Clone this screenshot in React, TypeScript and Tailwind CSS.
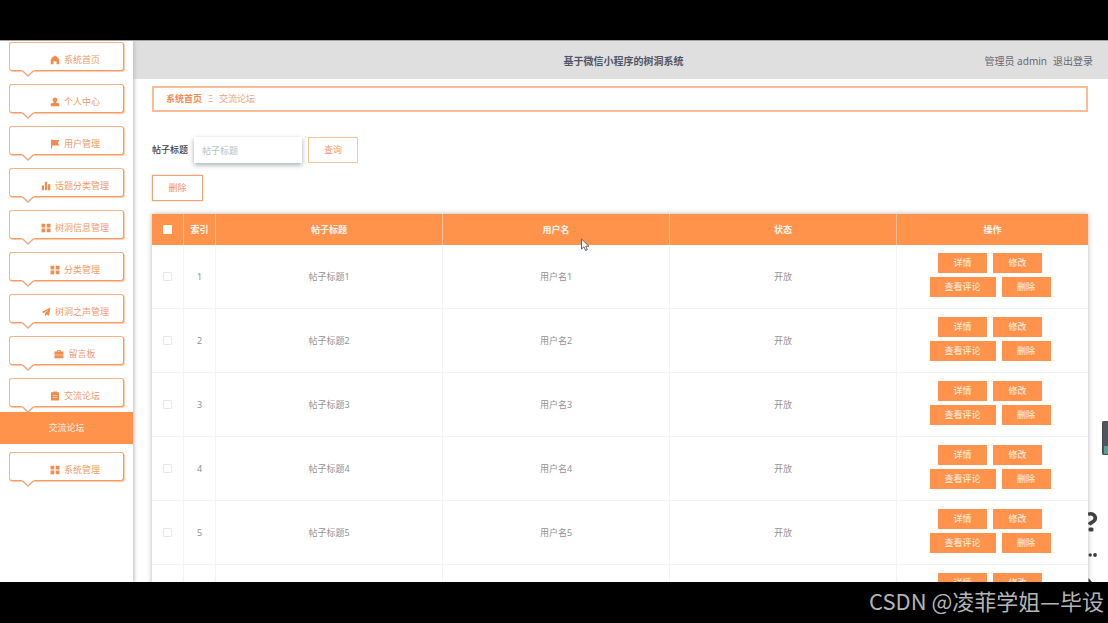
import React from "react";

type IconName = "home" | "user" | "flag" | "bars" | "grid" | "plane" | "case" | "clip";

const iconPaths: Record<IconName, string> = {
  home: "M10 1 L15 4.5 L18.5 9 V18.5 H13 V12.5 H7 V18.5 H1.5 V9 L5 4.5 Z",
  user: "M10 0.8 A4.9 4.9 0 0 1 13 9.6 L12.6 11.5 L18.5 13 V18.5 H1.5 V13 L7.4 11.5 L7 9.6 A4.9 4.9 0 0 1 10 0.8 Z",
  flag: "M2 1 H4.5 V2 H18.5 L15.8 7.5 L18.5 13 H4.5 V19 H2 Z",
  bars: "M1.5 9 H6 V18.5 H1.5 Z M7.8 1.5 H12.2 V18.5 H7.8 Z M14 6.5 H18.5 V18.5 H14 Z",
  grid: "M1 1.5 H8.5 V8.8 H1 Z M11.5 1.5 H19 V8.8 H11.5 Z M1 11.2 H8.5 V18.5 H1 Z M11.5 11.2 H19 V18.5 H11.5 Z",
  plane: "M19 1 L16 17.5 L10.8 14.8 L8 18.8 L7.5 13 L15 5.5 L5.5 12.2 L1 10.2 Z",
  case: "M6 5 V2 H14 V5 H19 V11.5 H1 V5 Z M7.8 5 H12.2 V3.7 H7.8 Z M1 12.5 H19 V18.5 H1 Z",
  clip: "M2 2.5 H6 V1 H14 V2.5 H18 V19 H2 Z M5.5 8 V9 H14.5 V8 Z M5.5 12.5 V13.5 H14.5 V12.5 Z",
};

function Icon({ name }: { name: IconName }) {
  return (
    <svg viewBox="0 0 20 20" className="size-[10px] shrink-0 fill-[#f28c4d]" fillRule="evenodd" aria-hidden="true">
      <path d={iconPaths[name]} />
    </svg>
  );
}

const menu: { icon: IconName; label: string }[] = [
  { icon: "home", label: "系统首页" },
  { icon: "user", label: "个人中心" },
  { icon: "flag", label: "用户管理" },
  { icon: "bars", label: "话题分类管理" },
  { icon: "grid", label: "树洞信息管理" },
  { icon: "grid", label: "分类管理" },
  { icon: "plane", label: "树洞之声管理" },
  { icon: "case", label: "留言板" },
  { icon: "clip", label: "交流论坛" },
];

function MenuItem({ icon, label }: { icon: IconName; label: string }) {
  return (
    <a
      href="#"
      className="relative mx-[9px] flex h-[29px] items-center justify-center gap-1 rounded-[3px] border border-[#fbb384] border-r-[#f99a60] border-b-[#f99a60] bg-white pt-[6px] pl-[17px] text-[9px] text-[#f0996b] shadow-[1px_1px_1px_#fbc9a8]"
    >
      <Icon name={icon} />
      {label}
      <svg viewBox="0 0 12 8" className="absolute top-[26px] left-3 h-2 w-3" aria-hidden="true">
        <path d="M0 0 H12 V1.5 L6 7 L0 1.5 Z" fill="#fff" />
        <path d="M0.5 1.7 L6 7 L11.5 1.7" fill="none" stroke="#e9a67c" strokeWidth="1.3" />
      </svg>
    </a>
  );
}

function RowButton({ children, wide = false }: { children: React.ReactNode; wide?: boolean }) {
  return (
    <button className={`h-5 bg-[#ff934c] text-[9px] leading-5 text-[#fff3e8] ${wide ? "w-[66px]" : "w-[49px]"}`}>
      {children}
    </button>
  );
}

const rows = [1, 2, 3, 4, 5, 6];
const headCell = "border-r border-[#ffbd91] p-0 text-center font-bold last:border-r-0";
const bodyCell = "border-r border-b border-[#f3f3f3] p-0 text-center last:border-r-0";

export default function App() {
  return (
    <div className="flex h-screen flex-col overflow-hidden bg-black font-['Noto_Sans','Noto_Sans_CJK_SC',sans-serif]">
      <div className="h-10 shrink-0" />
      <div className="relative flex min-h-0 flex-1 overflow-hidden border-t border-[#a5a1a2] bg-white">
        <nav className="z-10 flex w-[133px] shrink-0 flex-col bg-white pt-px shadow-[1px_0_4px_#b8b8b8]">
          <div className="flex flex-col gap-[13px]">
            {menu.map((m) => (
              <MenuItem key={m.label} icon={m.icon} label={m.label} />
            ))}
          </div>
          <a href="#" className="relative mt-[5px] mb-2 flex h-8 shrink-0 items-center justify-center bg-[#ff934c] text-[9px] text-[#fff0e4]">
            交流论坛
          </a>
          <MenuItem icon="grid" label="系统管理" />
        </nav>

        <div className="min-w-0 flex-1">
          <header className="grid h-[38px] grid-cols-[1fr_auto_1fr] items-center bg-[#dfdfdf] pt-[3px] pr-[15px] pl-[21px] text-[10px] text-[#666a73]">
            <span />
            <h1 className="font-bold text-[#505669]">基于微信小程序的树洞系统</h1>
            <div className="flex justify-end gap-[6px]">
              <span>管理员 admin</span>
              <a href="#">退出登录</a>
            </div>
          </header>

          <main className="pt-[7px] pr-5 pl-[19px]">
            <div className="flex h-[26px] items-center gap-[6px] border-2 border-[#fcbd94] px-3 text-[9px] text-[#f0a07a]">
              <a href="#" className="font-bold text-[#f58b55]">系统首页</a>
              <span className="text-[8px]">Ξ</span>
              <span>交流论坛</span>
            </div>

            <form className="mt-[25px] flex h-[26px] items-center text-[9px]" onSubmit={(e) => e.preventDefault()}>
              <label htmlFor="title" className="mr-[6px] font-medium text-[#404044]">帖子标题</label>
              <input
                id="title"
                placeholder="帖子标题"
                className="h-[26px] w-[108px] bg-white px-2 shadow-[0_2px_5px_#a9abae] outline-none placeholder:text-[#b9bec4]"
              />
              <button className="ml-[6px] h-[26px] w-[50px] border border-[#fbc39e] text-[#f49a6c]">查询</button>
            </form>
            <button className="mt-3 block h-[26px] w-[51px] border border-[#f2a272] text-[9px] text-[#f68f66] shadow-[0_0_1px_#f2a272]">
              删除
            </button>

            <table className="mt-[13px] w-full table-fixed border-separate border-spacing-0 text-[9px] text-[#929292] shadow-[0_0_5px_#b4b4b4]">
              <colgroup>
                <col className="w-8" />
                <col className="w-8" />
                <col />
                <col />
                <col />
                <col className="w-[191px]" />
              </colgroup>
              <thead className="bg-[#ff934c] text-[#fff6ee]">
                <tr className="h-[31px]">
                  <th className={headCell}>
                    <input type="checkbox" aria-label="全选" className="mx-auto block size-[9px] appearance-none rounded-[1px] bg-white" />
                  </th>
                  <th className={headCell}>索引</th>
                  <th className={headCell}>帖子标题</th>
                  <th className={headCell}>用户名</th>
                  <th className={headCell}>状态</th>
                  <th className={headCell}>操作</th>
                </tr>
              </thead>
              <tbody className="bg-white">
                {rows.map((n) => (
                  <tr key={n} className="h-16">
                    <td className={bodyCell}>
                      <input type="checkbox" aria-label={`选择${n}`} className="mx-auto block size-[9px] appearance-none rounded-[1px] border border-[#e8e8e8] bg-white" />
                    </td>
                    <td className={bodyCell}>{n}</td>
                    <td className={bodyCell}>帖子标题{n}</td>
                    <td className={bodyCell}>用户名{n}</td>
                    <td className={bodyCell}>开放</td>
                    <td className={bodyCell}>
                      <div className="flex flex-col gap-1 pt-2 pr-[5px] pb-[11px]">
                        <div className="flex justify-center gap-[6px]">
                          <RowButton>详情</RowButton>
                          <RowButton>修改</RowButton>
                        </div>
                        <div className="flex justify-center gap-[6px]">
                          <RowButton wide>查看评论</RowButton>
                          <RowButton>删除</RowButton>
                        </div>
                      </div>
                    </td>
                  </tr>
                ))}
              </tbody>
            </table>
          </main>
        </div>

        <svg viewBox="0 0 10 14" className="absolute top-[197px] left-[580px] h-[14px] w-[10px]" aria-hidden="true">
          <path d="M1.5 1 V11 L4 8.8 L5.6 12.5 L7.3 11.8 L5.8 8.2 H9 Z" fill="#fff" stroke="#59636f" strokeWidth="1" />
        </svg>
        <div className="absolute top-[380px] right-0 flex h-[34px] w-[6px] flex-col justify-end rounded-l-[2px] border border-r-0 border-[#454b50] bg-[#50555f]">
          <div className="ml-px h-2 bg-[#5f9c98]" />
        </div>
        <svg viewBox="0 0 10 72" className="absolute right-[10px] bottom-0 h-[72px] w-[10px]" aria-hidden="true">
          <path d="M0 4.5 C4 2.5 7.5 5 7.3 8.5 C7 12 3 12 1 14.5" fill="none" stroke="#404040" strokeWidth="3.6" />
          <rect x="0.5" y="17.5" width="5" height="4" rx="1.5" fill="#404040" />
          <circle cx="2.2" cy="45" r="1.7" fill="#404040" />
          <circle cx="7" cy="45" r="1.9" fill="#404040" />
          <path d="M0.5 68 L4 72 H0.5 Z" fill="#303030" />
        </svg>
      </div>
      <footer className="flex h-[41px] shrink-0 items-center justify-end pr-1 pb-1 font-['Noto_Sans_CJK_SC',sans-serif] text-[22px] text-[#b4b4b4]">
        CSDN @凌菲学姐—毕设
      </footer>
    </div>
  );
}
